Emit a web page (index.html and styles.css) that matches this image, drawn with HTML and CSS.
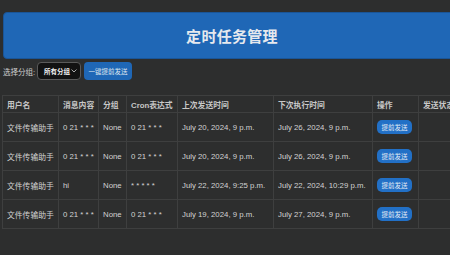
FILE: index.html
```html
<!DOCTYPE html>
<html lang="zh">
<head>
    <meta charset="UTF-8">
    <meta name="viewport" content="width=device-width, initial-scale=1.0">
    <title>定时任务管理</title>
    <link rel="stylesheet" href="styles.css">
</head>
<body>

    <div class="container">
        <div class="header">
            <h1>定时任务管理</h1>
        </div>

        <div class="toolbar">
            <label class="label">选择分组:</label>
            <div class="select">
                <span>所有分组</span>
                <svg width="6" height="4" viewBox="0 0 6 4"><path d="M0.5 0.5 L3 3 L5.5 0.5" fill="none" stroke="#bbb" stroke-width="0.9"/></svg>
            </div>
            <a href="#" class="btn">一键提前发送</a>
        </div>

        <table class="tasks">
            <thead>
                <tr>
                    <th class="c1">用户名</th>
                    <th class="c2">消息内容</th>
                    <th class="c3">分组</th>
                    <th class="c4">Cron表达式</th>
                    <th class="c5">上次发送时间</th>
                    <th class="c6">下次执行时间</th>
                    <th class="c7">操作</th>
                    <th class="c8">发送状态</th>
                </tr>
            </thead>
            <tbody>
                <tr>
                    <td>文件传输助手</td>
                    <td>0 21 * * *</td>
                    <td>None</td>
                    <td>0 21 * * *</td>
                    <td>July 20, 2024, 9 p.m.</td>
                    <td>July 26, 2024, 9 p.m.</td>
                    <td><a href="#" class="btn-sm">提前发送</a></td>
                    <td></td>
                </tr>
                <tr>
                    <td>文件传输助手</td>
                    <td>0 21 * * *</td>
                    <td>None</td>
                    <td>0 21 * * *</td>
                    <td>July 20, 2024, 9 p.m.</td>
                    <td>July 26, 2024, 9 p.m.</td>
                    <td><a href="#" class="btn-sm">提前发送</a></td>
                    <td></td>
                </tr>
                <tr>
                    <td>文件传输助手</td>
                    <td>hi</td>
                    <td>None</td>
                    <td>* * * * *</td>
                    <td>July 22, 2024, 9:25 p.m.</td>
                    <td>July 22, 2024, 10:29 p.m.</td>
                    <td><a href="#" class="btn-sm">提前发送</a></td>
                    <td></td>
                </tr>
                <tr>
                    <td>文件传输助手</td>
                    <td>0 21 * * *</td>
                    <td>None</td>
                    <td>0 21 * * *</td>
                    <td>July 19, 2024, 9 p.m.</td>
                    <td>July 27, 2024, 9 p.m.</td>
                    <td><a href="#" class="btn-sm">提前发送</a></td>
                    <td></td>
                </tr>
            </tbody>
        </table>
    </div>

</body>
</html>
```

FILE: styles.css
```css
/* General Styles */
html {
    overflow: hidden;
}

body {
    font-family: 'Liberation Sans', 'Noto Sans CJK SC', sans-serif;
    background-color: #2d2e2e;
    color: #d0d0d0;
    margin: 0;
    padding: 0;
}

.container {
    width: 600px;
    padding: 12px 0 0 3px;
}

.header {
    width: 456px;
    height: 45px;
    background-color: #1f67b6;
    border: 1px solid #1a5597;
    border-radius: 4px;
    display: flex;
    align-items: center;
    justify-content: center;
}

.header h1 {
    margin: 0;
    font-size: 15px;
    font-weight: bold;
    color: #e6e9ee;
    letter-spacing: 0.3px;
}

.toolbar {
    display: flex;
    align-items: center;
    margin-top: 3px;
    height: 18px;
}

.label {
    font-size: 7.5px;
    color: #cfcfcf;
    margin-right: 2px;
}

.select {
    width: 44px;
    height: 18px;
    box-sizing: border-box;
    background-color: #121212;
    border: 1px solid #5a5a5a;
    border-radius: 4px;
    display: flex;
    align-items: center;
    justify-content: space-between;
    padding: 0 3px 0 6px;
    font-size: 6.5px;
    font-weight: bold;
    color: #f0f0f0;
}

.btn {
    margin-left: 3px;
    width: 48px;
    height: 18px;
    box-sizing: border-box;
    background-color: #1f67b6;
    color: #dfe6ef;
    border-radius: 4px;
    font-size: 6.5px;
    text-decoration: none;
    display: flex;
    align-items: center;
    justify-content: center;
}

.tasks {
    margin: 15px 0 0 -1px;
    border-collapse: collapse;
    table-layout: fixed;
    width: 530px;
}

.tasks th,
.tasks td {
    border: 1px solid #3e3f3f;
    padding: 0 4px;
    text-align: left;
    font-size: 7.8px;
    font-weight: normal;
    white-space: nowrap;
    overflow: hidden;
    color: #d2d2d2;
}

.tasks th {
    height: 16px;
    font-weight: bold;
    color: #c8c8c8;
}

.tasks td {
    height: 28px;
}

.c1 { width: 47px; }
.c2 { width: 31px; }
.c3 { width: 19px; }
.c4 { width: 42px; }
.c5 { width: 87px; }
.c6 { width: 90px; }
.c7 { width: 37px; }
.c8 { width: 110px; }

.btn-sm {
    display: inline-flex;
    align-items: center;
    justify-content: center;
    width: 35px;
    height: 14px;
    background-color: #2270c6;
    color: #e3ebf5;
    border-radius: 5px;
    font-size: 6.5px;
    text-decoration: none;
}
```
